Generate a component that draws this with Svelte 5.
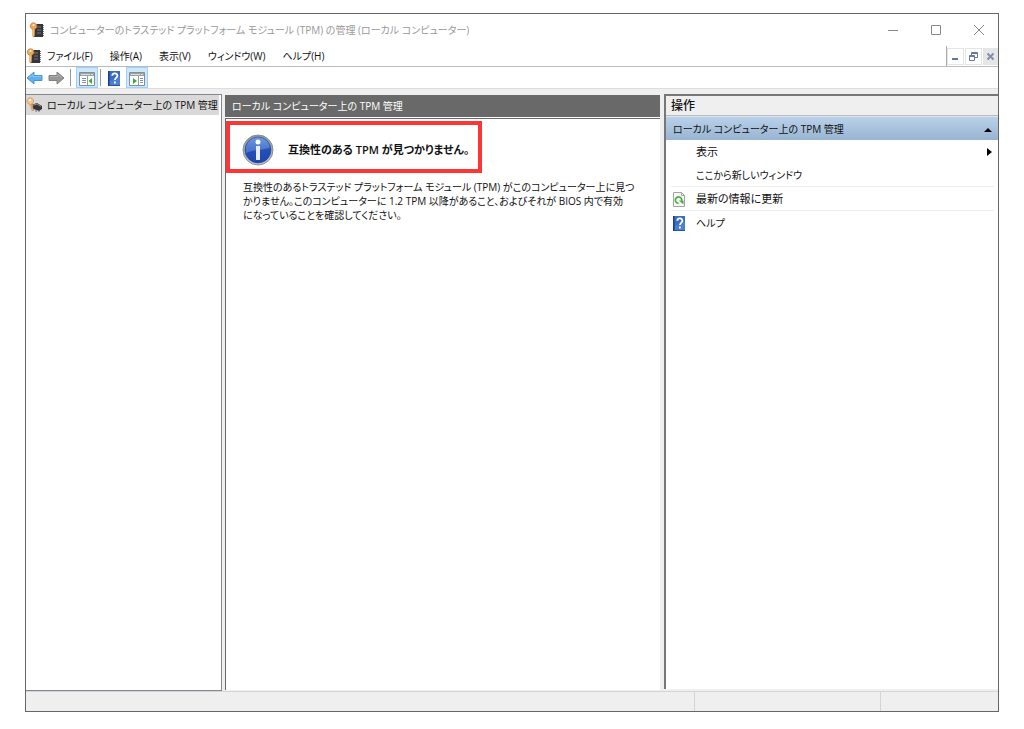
<script>
  const title = 'コンピューターのトラステッド プラットフォーム モジュール (TPM) の管理 (ローカル コンピューター)';
  const node = 'ローカル コンピューター上の TPM 管理';
  const menus = ['ファイル(F)', '操作(A)', '表示(V)', 'ウィンドウ(W)', 'ヘルプ(H)'];
</script>

{#snippet tpmIcon()}
  <svg class="icon" width="16" height="16" viewBox="0 0 16 16" aria-hidden="true">
    <path d="M6 2h8v13H5z" fill="#36363a" />
    <path d="M14.500 3v12" stroke="#777" stroke-dasharray="1 1" />
    <path d="M8 5h4M8 8h4M8 11h4" stroke="#77777b" />
    <path d="M3.300 7h2.400v7l-1.200 1.500L3.300 14z" fill="#e4943f" />
    <path d="M4.500 .8a3.300 3.300 0 1 0 .1 0z" fill="#f0a858" stroke="#c97b2e" stroke-width=".8" />
    <circle cx="4.500" cy="3" r="1" fill="#fff" />
    <path d="M4.300 7v7" stroke="#fbd6a5" stroke-width=".8" />
  </svg>
{/snippet}

{#snippet helpIcon()}
  <svg class="icon" width="16" height="16" viewBox="0 0 16 16" aria-hidden="true">
    <rect x="2" y="1" width="12" height="15" fill="#2456ac" />
    <rect x="4" y="1" width="10" height="14" fill="#4d7fd0" />
    <path d="M4 1h10v5L4 11z" fill="#3a6cc1" />
    <path d="M2.500 1v15" stroke="#173f8c" />
    <path d="M6.300 5.700c.2-3.100 5.300-2.900 5.100.1 0 1.800-2.400 1.800-2.400 4.100M8.900 11.400v2" fill="none" stroke="#fff" stroke-width="1.800" />
  </svg>
{/snippet}

<div class="desktop">
  <div class="window">
    <header class="titlebar">
      {@render tpmIcon()}
      <span class="title">{title}</span>
      <div class="captions">
        <button aria-label="最小化"><svg width="12" height="12" viewBox="0 0 12 12"><path d="M1 6.5h10" /></svg></button>
        <button aria-label="最大化"><svg width="12" height="12" viewBox="0 0 12 12"><path d="M1.5 1.5h9v9h-9z" /></svg></button>
        <button aria-label="閉じる"><svg width="12" height="12" viewBox="0 0 12 12"><path d="M1 1l10 10M11 1L1 11" /></svg></button>
      </div>
    </header>

    <nav class="menubar">
      {@render tpmIcon()}
      <div class="menus">
        {#each menus as menu}
          <button>{menu}</button>
        {/each}
      </div>
      <div class="mdi">
        <button aria-label="子ウィンドウを最小化"><svg width="9" height="9" viewBox="0 0 9 9"><path d="M1 7h6" stroke="#64799a" stroke-width="2" /></svg></button>
        <button aria-label="子ウィンドウを元に戻す"><svg width="9" height="9" viewBox="0 0 9 9" fill="none" stroke="#64799a"><path d="M2.5 3V.5h6v5H6M2 1.5h6" /><path d="M.5 3.5h5v5h-5zM0 4.5h6" /></svg></button>
        <button class="shut" aria-label="子ウィンドウを閉じる"><svg width="9" height="9" viewBox="0 0 9 9"><path d="M1.5 1.5l6 6M7.5 1.5l-6 6" stroke="#8190a8" stroke-width="2" /></svg></button>
      </div>
    </nav>

    <div class="toolbar">
      <button aria-label="戻る">
        <svg width="17" height="16" viewBox="0 0 17 16"><path d="M1 8l7-6v3.500h8v5H8V14z" fill="#5fb0ee" stroke="#4a93d2" /><path d="M3 8l4-3.500v2h8" fill="none" stroke="#86c6f5" /></svg>
      </button>
      <button aria-label="進む">
        <svg width="17" height="16" viewBox="0 0 17 16"><path d="M16 8L9 2v3.500H1v5h8V14z" fill="#989898" stroke="#808080" /><path d="M2 6.500h8v-2L14 8" fill="none" stroke="#adadad" /></svg>
      </button>
      <span class="sep"></span>
      <button class="on" aria-label="コンソール ツリーの表示/非表示">
        <svg width="16" height="16" viewBox="0 0 16 16"><path d="M.5 2.500h15v13H.5z" fill="#fff" stroke="#8b8b8b" /><path d="M1 3h14v3H1z" fill="#9aa3ab" /><path d="M2 4.500h9M12 4.500h2" stroke="#d8dde1" /><path d="M8.500 6v9" stroke="#9a9a9a" /><path d="M3 8.500h4M3 10.500h4M3 12.500h4" stroke="#7c93b5" /><path d="M13 8v6l-3.500-3z" fill="#35b324" /></svg>
      </button>
      <span class="sep"></span>
      <button class="help" aria-label="ヘルプ">{@render helpIcon()}</button>
      <button class="on" aria-label="操作ウィンドウの表示/非表示">
        <svg width="16" height="16" viewBox="0 0 16 16"><path d="M.5 2.500h15v13H.5z" fill="#fff" stroke="#8b8b8b" /><path d="M1 3h14v3H1z" fill="#9aa3ab" /><path d="M2 4.500h9M12 4.500h2" stroke="#d8dde1" /><path d="M9.500 6v9" stroke="#9a9a9a" /><path d="M11 8.500h3M11 10.500h3M11 12.500h3" stroke="#7c93b5" /><path d="M4 8v6l4-3z" fill="#35b324" /></svg>
      </button>
    </div>

    <main class="panes">
      <aside class="tree">
        <button class="node">
          <svg class="icon" width="16" height="16" viewBox="0 0 16 16" aria-hidden="true">
            <path d="M5 8l6-2 5 3v3l-3 2-8-3z" fill="#34353a" />
            <path d="M6 8.500l5-1.500 4 2.500" fill="none" stroke="#909090" />
            <path d="M7 12v2M10 13v2M13 13v2" stroke="#777" />
            <path d="M3.700 6.500L6 6l1.500 6.500-.8 1.500-1.500-1z" fill="#e0a35f" />
            <path d="M4.200 .8a3.300 3.300 0 1 0 .1 0z" fill="#f3c68f" stroke="#cf9350" stroke-width=".8" />
            <circle cx="4" cy="3" r="1" fill="#fff" />
          </svg>
          <span>{node}</span>
        </button>
      </aside>

      <section class="result">
        <h2>{node}</h2>
        <div class="content">
          <div class="notice">
            <svg width="32" height="32" viewBox="0 0 32 32" aria-hidden="true">
              <defs>
                <linearGradient id="ball" x1="0" y1="0" x2="0" y2="1">
                  <stop offset="0" stop-color="#5c8bdc" /><stop offset=".5" stop-color="#2450b8" /><stop offset="1" stop-color="#1d44b4" />
                </linearGradient>
                <linearGradient id="rim" x1="0" y1="0" x2="0" y2="1">
                  <stop offset="0" stop-color="#8f9499" /><stop offset="1" stop-color="#c9cbce" />
                </linearGradient>
              </defs>
              <circle cx="16" cy="16" r="15" fill="url(#rim)" stroke="#8a8d90" />
              <circle cx="16" cy="16" r="13" fill="url(#ball)" stroke="#27478d" stroke-width=".6" />
              <path d="M4 13a12.300 12.300 0 0 1 24 0c-6 4-16 2-24 6z" fill="#88aee9" opacity=".4" />
              <circle cx="16" cy="8" r="2.500" fill="#fff" />
              <path d="M14 12h4v14h-4z" fill="#e9edf5" />
            </svg>
            <strong>互換性のある TPM が見つかりません。</strong>
          </div>
          <p>
            互換性のあるトラステッド プラットフォーム モジュール (TPM) がこのコンピューター上に見つ<br />かりません。このコンピューターに 1.2 TPM 以降があること、およびそれが BIOS 内で有効<br />になっていることを確認してください。
          </p>
        </div>
      </section>

      <aside class="actions">
        <h2>操作</h2>
        <button class="group">
          <span>{node}</span>
          <svg width="10" height="10" viewBox="0 0 10 10" aria-hidden="true"><path d="M1 8l4-4 4 4z" /></svg>
        </button>
        <ul>
          <li>
            <button><span class="icon"></span><span class="label">表示</span>
              <svg width="10" height="10" viewBox="0 0 10 10" aria-hidden="true"><path d="M3 1l5 4-5 4z" /></svg>
            </button>
          </li>
          <li><button><span class="icon"></span><span class="label kana">ここから新しいウィンドウ</span></button></li>
          <li class="ruled">
            <button>
              <svg class="icon" width="16" height="16" viewBox="0 0 16 16" aria-hidden="true">
                <path d="M2.500 1.500h8l3 3v11h-11z" fill="#f7f7f7" stroke="#a3a3a3" />
                <path d="M10.500 1.500v3h3" fill="none" stroke="#a3a3a3" />
                <path d="M7.500 12.300a3.200 3.200 0 1 1 3.200-2.600" fill="none" stroke="#43ad36" stroke-width="1.600" />
                <path d="M8 9.500h4.500v4z" fill="#43ad36" />
              </svg>
              <span class="label">最新の情報に更新</span>
            </button>
          </li>
          <li class="ruled"><button>{@render helpIcon()}<span class="label kana">ヘルプ</span></button></li>
        </ul>
      </aside>
    </main>

    <footer class="status"><span></span><span></span><span></span></footer>
  </div>
</div>

<style>
  :global(body) {
    background: #fff;
  }
  .desktop {
    box-sizing: border-box;
    min-height: 100vh;
    display: flex;
    padding: 13px 25px 17px;
    font-family: "Open Sans", "Noto Sans CJK JP", sans-serif;
    font-size: 10px;
    line-height: 16px;
    font-feature-settings: "palt";
    color: #111;
    white-space: nowrap;
  }
  .window {
    flex: 1;
    min-width: 0;
    display: flex;
    flex-direction: column;
    border: 1px solid #666;
    background: #efefef;
  }
  button {
    display: flex;
    align-items: center;
    margin: 0;
    padding: 0;
    border: 0;
    background: none;
    color: inherit;
    font: inherit;
    font-feature-settings: inherit;
    text-align: left;
  }
  svg {
    display: block;
    flex: none;
  }
  .icon {
    flex: none;
    width: 16px;
  }
  h2 {
    margin: 0;
    font-size: 10px;
    font-weight: 400;
  }

  .titlebar {
    display: flex;
    align-items: center;
    gap: 5px;
    height: 32px;
    padding-left: 3px;
    background: #fff;
    color: #999;
  }
  .captions {
    display: flex;
    gap: 31px;
    margin-left: auto;
    padding-right: 13px;
  }
  .captions path {
    fill: none;
    stroke: #888;
  }

  .menubar {
    display: flex;
    align-items: center;
    height: 20px;
    border-bottom: 1px solid #bbb;
    background: #fff;
  }
  .menus {
    display: flex;
    gap: 17px;
    padding-left: 5px;
  }
  .mdi {
    display: flex;
    align-self: stretch;
    align-items: center;
    gap: 1px;
    margin-left: auto;
    border-left: 1px solid #aaa;
  }
  .mdi button {
    box-sizing: border-box;
    justify-content: center;
    width: 17px;
    height: 17px;
    border: 1px solid #e4e4e4;
  }
  .mdi .shut {
    width: 15px;
    background: #e6e6e6;
  }

  .toolbar {
    display: flex;
    align-items: center;
    height: 21px;
    border-bottom: 1px solid #ddd;
    background: #fff;
  }
  .toolbar button {
    margin-right: 5px;
  }
  .toolbar .sep {
    width: 1px;
    height: 17px;
    margin-right: 5px;
    background: #999;
  }
  .toolbar .on {
    box-sizing: border-box;
    justify-content: center;
    width: 22px;
    height: 21px;
    margin-right: 2px;
    border: 1px solid #99d1ff;
    background: #cce8ff;
  }
  .toolbar .help {
    margin-right: 4px;
  }

  .panes {
    flex: 1;
    display: grid;
    grid-template-columns: 196px minmax(0, 1fr) 334px;
    padding-top: 5px;
  }
  .tree {
    border: solid #828790;
    border-width: 1px 1px 1px 0;
    background: #fff;
  }
  .node {
    gap: 5px;
    height: 20px;
    padding-right: 1px;
    background: #d9d9d9;
  }

  .result {
    display: flex;
    flex-direction: column;
    margin: 1px 4px 1px 3px;
  }
  .result h2 {
    padding: 3px 7px;
    border-bottom: 1px solid #fff;
    background: #696969;
    color: #fff;
  }
  .content {
    flex: 1;
    padding: 2px 0;
    border: solid #696969;
    border-width: 1px 0 0 1px;
    background: #fff;
  }
  .notice {
    box-sizing: border-box;
    display: flex;
    align-items: center;
    gap: 14px;
    width: 256px;
    height: 52px;
    padding: 6px 12px 0;
    border: 4px solid #fd3535;
  }
  strong {
    font-size: 11px;
    font-weight: 600;
  }
  .content p {
    margin: 7px 0 0;
    padding: 0 17px;
    line-height: 14px;
  }

  .actions {
    margin-bottom: 2px;
    border: solid #777;
    border-width: 2px 0 0 2px;
    background: #fff;
  }
  .actions h2 {
    padding: 2px 5px 1px;
    border-bottom: 1px solid #bbb;
    background: #efefef;
    font-size: 12px;
    font-weight: 500;
  }
  .group {
    justify-content: space-between;
    width: 100%;
    height: 24px;
    padding: 0 5px 0 7px;
    border-top: 1px solid #dbe5ef;
    background: linear-gradient(#b9d1ea, #99b4d1);
  }
  ul {
    margin: 0;
    padding: 0 4px 0 5px;
    list-style: none;
    font-size: 11px;
  }
  li button {
    width: 100%;
    height: 23px;
  }
  .ruled {
    border-top: 1px solid #eee;
  }
  .label {
    flex: 1;
    padding-left: 9px;
  }
  .kana {
    font-size: 10px;
  }

  .status {
    display: grid;
    grid-template-columns: 668px 1fr 118px;
    height: 19px;
    border-top: 1px solid #d4d4d4;
  }
  .status span + span {
    border-left: 1px solid #d4d4d4;
  }
</style>
